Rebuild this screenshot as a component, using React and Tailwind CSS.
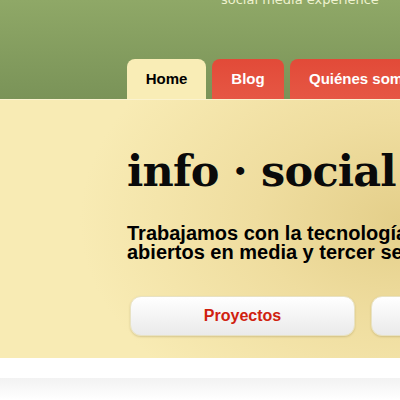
export default function App() {
  return (
    <div className="w-[400px] h-[400px] overflow-hidden bg-white flex flex-col">
      <div className="h-[99px] shrink-0 bg-gradient-to-b from-[#8fa867] to-[#7a9358] flex flex-col overflow-hidden">
        <div className="h-[10px] overflow-visible relative">
          <div className="absolute left-[221px] top-[-7px] whitespace-nowrap text-[13px] leading-[13px] text-[#eef2cf] font-['DejaVu_Sans',sans-serif]">
            social media experience
          </div>
        </div>
        <div className="mt-auto flex items-end gap-[6px] pl-[127px] whitespace-nowrap font-['Liberation_Sans',Arial,sans-serif] font-bold text-[15px]">
          <div className="w-[79px] h-[40px] shrink-0 rounded-t-[8px] bg-[#f9edb6] text-black flex items-center justify-center">
            Home
          </div>
          <div className="w-[72px] h-[40px] shrink-0 rounded-t-[8px] bg-gradient-to-b from-[#e24a38] to-[#e65744] text-white flex items-center justify-center">
            Blog
          </div>
          <div className="w-[160px] h-[40px] shrink-0 rounded-t-[8px] bg-gradient-to-b from-[#e24a38] to-[#e65744] text-white flex items-center pl-[19px]">
            Quiénes somos
          </div>
        </div>
      </div>
      <div className="h-px shrink-0 bg-[#fbf3cf]"></div>
      <div className="h-[258px] shrink-0 bg-[radial-gradient(ellipse_320px_220px_at_400px_120px,#e4cf8a_0%,#efdd9f_45%,#f8ebb4_100%)] pl-[127px] pt-[45px] whitespace-nowrap overflow-hidden">
        <div className="font-['DejaVu_Serif',serif] font-bold text-[43px] leading-[52px] text-[#0a0a0a] tracking-[-0.8px]">
          info · social
        </div>
        <div className="mt-[27px] font-['Liberation_Sans',Arial,sans-serif] font-bold text-[20px] leading-[19px] text-black">
          <div>Trabajamos con la tecnología de</div>
          <div>abiertos en media y tercer sector</div>
        </div>
        <div className="mt-[34px] flex gap-[16px] ml-[3px]">
          <div className="w-[225px] h-[40px] shrink-0 rounded-[11px] bg-gradient-to-b from-white to-[#eaeaea] border border-[#e8e2c4] shadow-[0_1px_2px_rgba(120,100,40,0.25)] flex items-center justify-center font-['Liberation_Sans',Arial,sans-serif] font-bold text-[16px] text-[#d0210f]">
            Proyectos
          </div>
          <div className="w-[225px] h-[40px] shrink-0 rounded-[11px] bg-gradient-to-b from-white to-[#eaeaea] border border-[#e8e2c4] shadow-[0_1px_2px_rgba(120,100,40,0.25)]"></div>
        </div>
      </div>
      <div className="h-[20px] shrink-0 bg-white"></div>
      <div className="h-[22px] shrink-0 bg-gradient-to-b from-[#f2f2f2] to-white"></div>
    </div>
  );
}
